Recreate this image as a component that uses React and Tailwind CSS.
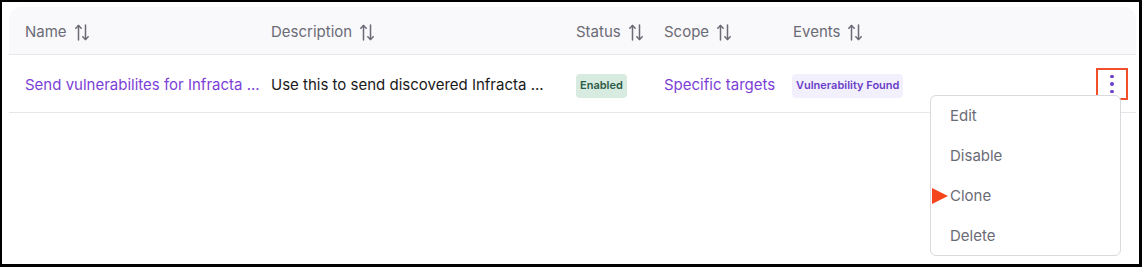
import React from 'react';

const columns = [
  { key: 'name', label: 'Name', width: 'w-[246px]' },
  { key: 'description', label: 'Description', width: 'w-[305px]' },
  { key: 'status', label: 'Status', width: 'w-[88px]' },
  { key: 'scope', label: 'Scope', width: 'w-[129px]' },
  { key: 'events', label: 'Events', width: 'flex-1' },
];

const menuItems = ['Edit', 'Disable', 'Clone', 'Delete'];

// thin up/down sort arrows
const SortIcon = () => (
  <svg width="14" height="17" viewBox="0 0 14 17" fill="none" stroke="#6b6b76" strokeWidth="1.5" strokeLinecap="round" strokeLinejoin="round">
    <path d="M3.5 16V1.5" />
    <path d="M0.8 4.3L3.5 1.5L6.2 4.3" />
    <path d="M10.5 1V15.5" />
    <path d="M7.8 12.7L10.5 15.5L13.2 12.7" />
  </svg>
);

export default function App() {
  return (
    <div
      className="w-[1142px] h-[267px] bg-white border-l-2 border-t-2 border-r-[3px] border-b-[3px] border-black relative overflow-hidden"
      style={{ fontFamily: 'Inter, "Noto Sans", sans-serif' }}
    >
      <div className="ml-[7px] mt-[5px] w-[1127px]">
        {/* Header */}
        <div className="flex items-center h-[48px] pt-[4px] bg-[#f9f9fb] rounded-t-xl border-b border-[#e5e7eb] pl-4">
          {columns.map((col) => (
            <div key={col.key} className={`${col.width} flex items-center gap-[8px] text-[15px] text-[#6b6b76]`}>
              <span>{col.label}</span>
              <SortIcon />
            </div>
          ))}
        </div>

        {/* Row */}
        <div className="flex items-center h-[58px] pt-[4px] border-b border-[#e5e7eb] pl-4 text-[15px]">
          <div className="w-[246px] text-[#7c3fd6] whitespace-nowrap">Send vulnerabilites for Infracta ...</div>
          <div className="w-[305px] text-[#1a1a1a] whitespace-nowrap">Use this to send discovered Infracta ...</div>
          <div className="w-[88px]">
            <span className="inline-flex items-center h-[24px] px-[4px] rounded bg-[#d7ebe0] text-[#2c5b47] text-[11px] font-semibold">
              Enabled
            </span>
          </div>
          <div className="w-[128px] text-[#7c3fd6] whitespace-nowrap">Specific targets</div>
          <div className="flex-1">
            <span className="inline-flex items-center h-[24px] px-[4px] rounded bg-[#f3f0fd] text-[#6a3fc8] text-[11px] font-semibold">
              Vulnerability Found
            </span>
          </div>
          <div className="w-[32px] h-[32px] mr-[8px] mb-[3px] border-2 border-[#f2502a] flex flex-col items-center justify-center gap-[4px]">
            <span className="w-[3.5px] h-[3.5px] rounded-full bg-[#6a3fc8]" />
            <span className="w-[3.5px] h-[3.5px] rounded-full bg-[#6a3fc8]" />
            <span className="w-[3.5px] h-[3.5px] rounded-full bg-[#6a3fc8]" />
          </div>
        </div>
      </div>

      {/* Dropdown menu */}
      <div className="absolute left-[928px] top-[93px] w-[191px] h-[161px] bg-white border border-[#d9d9de] rounded-md">
        {menuItems.map((item) => (
          <div key={item} className="relative h-[40px] flex items-center pl-[19px] text-[15px] text-[#6b6b76]">
            {item === 'Clone' && (
              <svg className="absolute left-[1px] top-[12px]" width="16" height="16" viewBox="0 0 16 16">
                <polygon points="0,0 16,8 0,16" fill="#f4451d" />
              </svg>
            )}
            {item}
          </div>
        ))}
      </div>
    </div>
  );
}
